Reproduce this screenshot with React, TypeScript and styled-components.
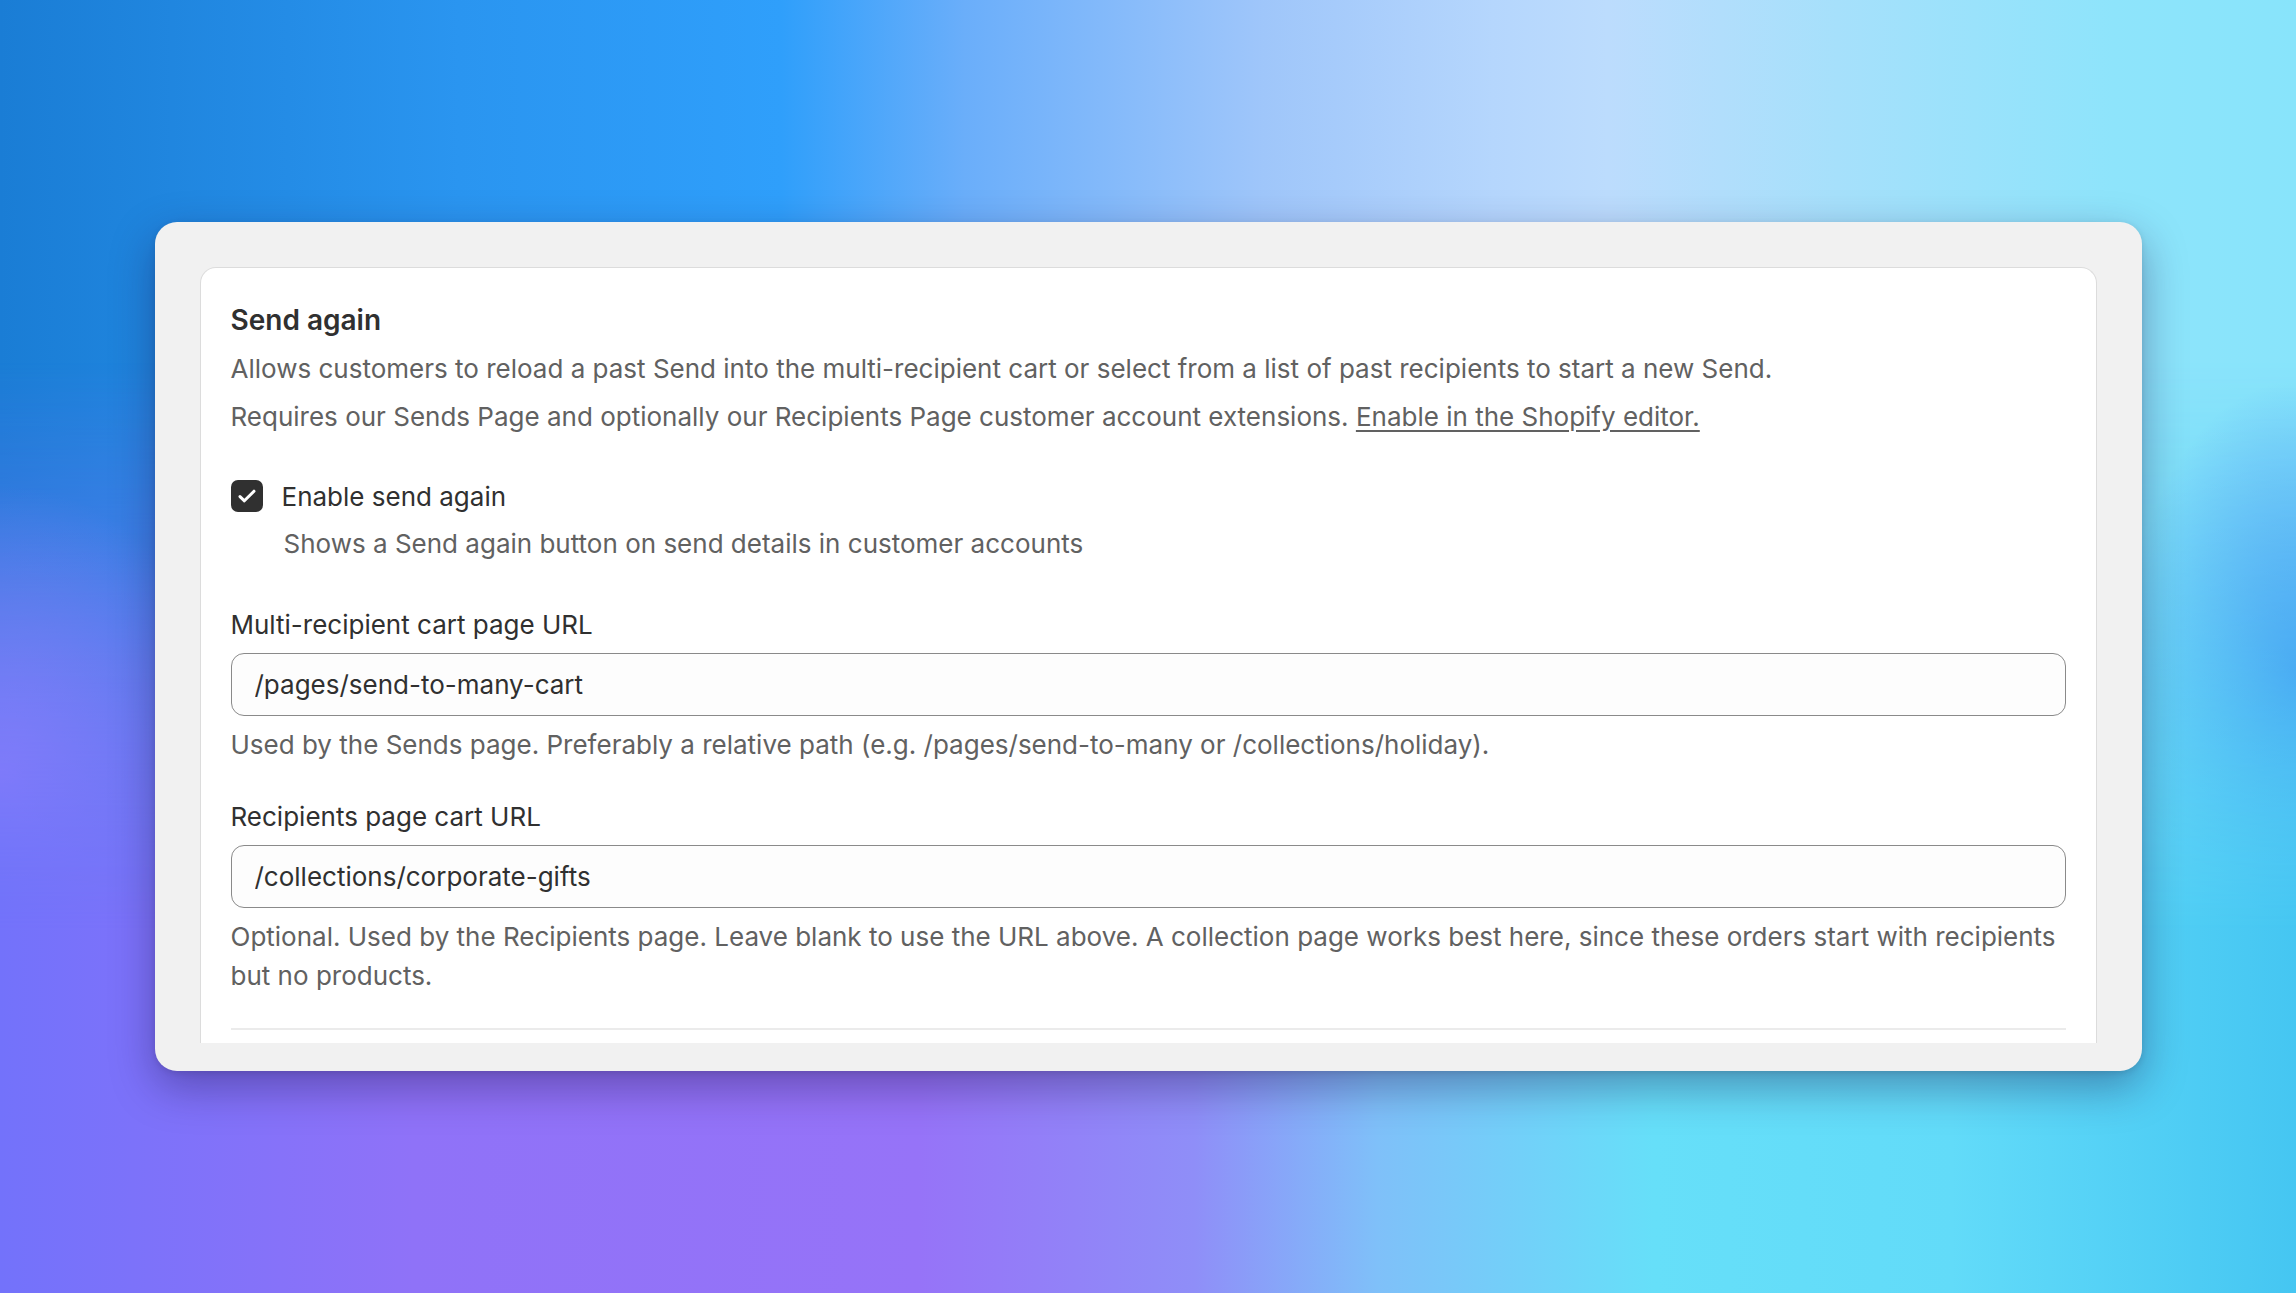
import styled, { createGlobalStyle } from "styled-components";

const GlobalStyle = createGlobalStyle`
  html, body {
    margin: 0;
    padding: 0;
  }
  body {
    font-family: Inter, "Noto Sans", "Liberation Sans", sans-serif;
    -webkit-font-smoothing: antialiased;
  }
`;

const Backdrop = styled.div`
  position: relative;
  width: 100vw;
  height: 100vh;
  display: flex;
  align-items: center;
  justify-content: center;
  overflow: hidden;
  background:
    radial-gradient(ellipse 14% 30% at 0% 60%, rgba(168, 146, 252, 0.9), transparent 75%),
    radial-gradient(ellipse 10% 30% at 100% 52%, rgba(78, 138, 244, 0.95), transparent 75%),
    linear-gradient(90deg, #1a7dd5 0%, #2a95f0 20%, #2f9ffb 34%, #6aaefa 42%, #9fc6fa 55%, #b5d6fd 65%, #bcdcfd 70%, #a6e0fb 80%, #8ee4fb 92%, #88e4fb 100%);

  /* lower half of the wash: violet on the left, cyan on the right */
  &::before {
    content: "";
    position: absolute;
    inset: 0;
    background: linear-gradient(90deg, #7372fb 0%, #8f72f8 18%, #9673f8 40%, #8f8ef8 52%, #7fc0f9 60%, #66dff9 72%, #62dbf9 85%, #45c6f2 100%);
    -webkit-mask-image: linear-gradient(to bottom, transparent 28%, #000 72%);
    mask-image: linear-gradient(to bottom, transparent 28%, #000 72%);
  }
`;

const Frame = styled.div`
  position: relative;
  z-index: 1;
  width: 1987px;
  height: 849px;
  box-sizing: border-box;
  padding: 45px 45px 28px 45px;
  background: #f1f1f1;
  border-radius: 22px;
  box-shadow: 0 16px 44px rgba(25, 15, 70, 0.38), 0 2px 6px rgba(0, 0, 0, 0.1);
  display: flex;
  overflow: hidden;
`;

const Card = styled.section`
  flex: 1;
  background: #ffffff;
  border: 1.5px solid #dcdcdc;
  border-bottom: none;
  border-radius: 16px 16px 0 0;
  padding: 35px 30px 0 30px;
  overflow: hidden;
  display: flex;
  flex-direction: column;
`;

const Title = styled.h2`
  margin: 0;
  font-size: 28px;
  line-height: 34px;
  font-weight: 600;
  color: #303030;
`;

const Text = styled.p<{ $gap?: number }>`
  margin: ${(p) => p.$gap ?? 0}px 0 0 0;
  font-size: 26px;
  line-height: 40px;
  color: #616161;
`;

const Link = styled.a`
  color: #616161;
  text-decoration: underline;
  text-underline-offset: 4px;
  cursor: pointer;
`;

const CheckRow = styled.label`
  margin-top: 39px;
  display: flex;
  align-items: center;
  gap: 19px;
  height: 40px;
  font-size: 26px;
  color: #303030;
  cursor: pointer;
`;

const Box = styled.span`
  width: 32px;
  height: 32px;
  border-radius: 7px;
  background: #303030;
  display: flex;
  align-items: center;
  justify-content: center;
  flex-shrink: 0;
`;

const CheckHelp = styled(Text)`
  margin-top: 8px;
  padding-left: 53px;
`;

const Field = styled.div<{ $gap: number }>`
  margin-top: ${(p) => p.$gap}px;
  display: flex;
  flex-direction: column;
`;

const Label = styled.div`
  font-size: 26px;
  line-height: 40px;
  color: #303030;
`;

const Input = styled.input`
  margin-top: 8px;
  height: 63px;
  box-sizing: border-box;
  border: 1.5px solid #8a8a8a;
  border-radius: 13px;
  background: #fdfdfd;
  padding: 0 23px;
  font-family: inherit;
  font-size: 26px;
  color: #303030;
  outline: none;
`;

const Help = styled(Text)`
  margin-top: 9px;
  line-height: 39.5px;
`;

const Divider = styled.hr`
  margin: 32px 0 0 0;
  border: none;
  height: 2px;
  background: #ebebeb;
  flex-shrink: 0;
`;

export default function App() {
  return (
    <>
      <GlobalStyle />
      <Backdrop>
        <Frame>
          <Card>
            <Title>Send again</Title>
            <Text $gap={12}>
              Allows customers to reload a past Send into the multi-recipient cart or select from a list of past
              recipients to start a new Send.
            </Text>
            <Text $gap={8}>
              Requires our Sends Page and optionally our Recipients Page customer account extensions.{" "}
              <Link>Enable in the Shopify editor.</Link>
            </Text>

            <CheckRow>
              <Box>
                <svg width="32" height="32" viewBox="0 0 32 32" fill="none">
                  <path d="M9 16.6l4.4 4.2L23 11.2" stroke="#fff" strokeWidth="3" strokeLinecap="round" strokeLinejoin="round" />
                </svg>
              </Box>
              Enable send again
            </CheckRow>
            <CheckHelp>Shows a Send again button on send details in customer accounts</CheckHelp>

            <Field $gap={41}>
              <Label>Multi-recipient cart page URL</Label>
              <Input defaultValue="/pages/send-to-many-cart" />
              <Help>Used by the Sends page. Preferably a relative path (e.g. /pages/send-to-many or /collections/holiday).</Help>
            </Field>

            <Field $gap={32}>
              <Label>Recipients page cart URL</Label>
              <Input defaultValue="/collections/corporate-gifts" />
              <Help>
                Optional. Used by the Recipients page. Leave blank to use the URL above. A collection page works best
                here, since these orders start with recipients but no products.
              </Help>
            </Field>

            <Divider />
          </Card>
        </Frame>
      </Backdrop>
    </>
  );
}
